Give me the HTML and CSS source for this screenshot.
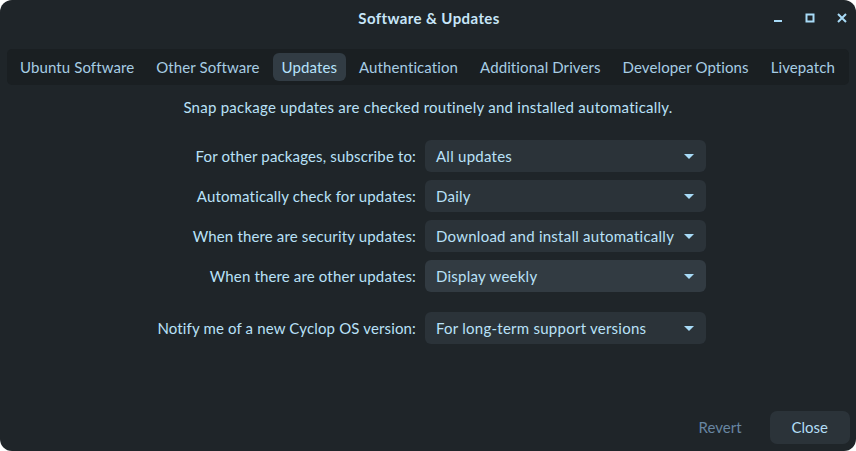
FILE: index.html
```html
<!DOCTYPE html>
<html>
<head>
<meta charset="utf-8">
<link rel="stylesheet" href="styles.css">
</head>
<body>
<div class="window">
  <header class="titlebar">
    <div class="title">Software &amp; Updates</div>
    <div class="controls">
      <svg class="ctl" width="12" height="12" viewBox="0 0 12 12"><rect x="2" y="8" width="8" height="2" fill="#a8dbf7"/></svg>
      <svg class="ctl" width="12" height="12" viewBox="0 0 12 12"><rect x="2.5" y="2.5" width="7" height="7" fill="none" stroke="#a8dbf7" stroke-width="2"/></svg>
      <svg class="ctl" width="12" height="12" viewBox="0 0 12 12"><path d="M2 2 L10 10 M10 2 L2 10" stroke="#a8dbf7" stroke-width="2"/></svg>
    </div>
  </header>
  <nav class="tabs">
    <div class="tab">Ubuntu Software</div>
    <div class="tab">Other Software</div>
    <div class="tab active">Updates</div>
    <div class="tab">Authentication</div>
    <div class="tab">Additional Drivers</div>
    <div class="tab">Developer Options</div>
    <div class="tab">Livepatch</div>
  </nav>
  <p class="note">Snap package updates are checked routinely and installed automatically.</p>
  <div class="form">
    <label class="lbl">For other packages, subscribe to:</label>
    <div class="combo"><span>All updates</span><span class="arrow"></span></div>
    <label class="lbl">Automatically check for updates:</label>
    <div class="combo"><span>Daily</span><span class="arrow"></span></div>
    <label class="lbl">When there are security updates:</label>
    <div class="combo"><span>Download and install automatically</span><span class="arrow"></span></div>
    <label class="lbl">When there are other updates:</label>
    <div class="combo hover"><span>Display weekly</span><span class="arrow"></span></div>
    <label class="lbl sep">Notify me of a new Cyclop OS version:</label>
    <div class="combo sep"><span>For long-term support versions</span><span class="arrow"></span></div>
  </div>
  <footer class="footer">
    <div class="btn flat">Revert</div>
    <div class="btn">Close</div>
  </footer>
</div>
</body>
</html>
```
FILE: styles.css
```css
* { box-sizing: border-box; }
html, body { margin: 0; padding: 0; background: #ffffff; }
body { font-family: "Lato", "Noto Sans", sans-serif; font-size: 15px; letter-spacing: 0.25px; color: #b9e1f8; }
.window {
  width: 856px; height: 451px;
  background: #1f2529;
  border-radius: 12px;
  display: flex; flex-direction: column;
  overflow: hidden;
}
.titlebar {
  height: 38px; position: relative;
  display: flex; align-items: center; justify-content: center;
}
.title { font-weight: bold; font-size: 15px; letter-spacing: 0.4px; color: #c7e6f8; margin-top: -2px; margin-left: 2px; }
.controls {
  position: absolute; right: 8px; top: 12px;
  display: flex; gap: 20px;
}
.ctl { display: block; }
.tabs {
  margin: 11px 7px 0 7px;
  height: 36px;
  background: #1a1f22;
  border-radius: 5px;
  display: flex; align-items: center;
  padding-left: 4px; gap: 4px;
}
.tab {
  height: 28px; line-height: 28px;
  padding: 0 9px;
  border-radius: 6px;
  color: #a7cde4;
  white-space: nowrap;
  letter-spacing: 0.1px;
}
.tab.active { background: #323c44; color: #b6e2fb; }
.note { margin: 12px 0 0; text-align: center; line-height: 20px; color: #b9e1f8; }
.form {
  margin-top: 23px;
  display: grid;
  grid-template-columns: 416px 281px;
  column-gap: 9px;
  row-gap: 8px;
}
.lbl { text-align: right; line-height: 32px; white-space: nowrap; color: #b9e1f8; letter-spacing: 0.15px; }
.combo {
  height: 32px;
  background: #2b3339;
  border-radius: 6px;
  display: flex; align-items: center; justify-content: space-between;
  padding: 0 12px 0 11px;
  color: #b9e1f8;
  white-space: nowrap;
}
.combo.hover { background: #323b42; }
.sep { margin-top: 12px; }
.arrow {
  flex: none;
  width: 0; height: 0;
  border-left: 5px solid transparent;
  border-right: 5px solid transparent;
  border-top: 5px solid #a8dbf7;
}
.footer {
  margin-top: auto;
  display: flex; justify-content: flex-end;
  gap: 8px;
  padding: 0 6px 7px 0;
}
.btn {
  height: 33px; line-height: 33px;
  padding: 0 22px;
  border-radius: 7px;
  background: #2b3339;
  color: #b3def6;
  font-size: 15px;
  letter-spacing: 0;
}
.btn.flat { background: transparent; color: #6886a2; padding: 0 20px; }
```
